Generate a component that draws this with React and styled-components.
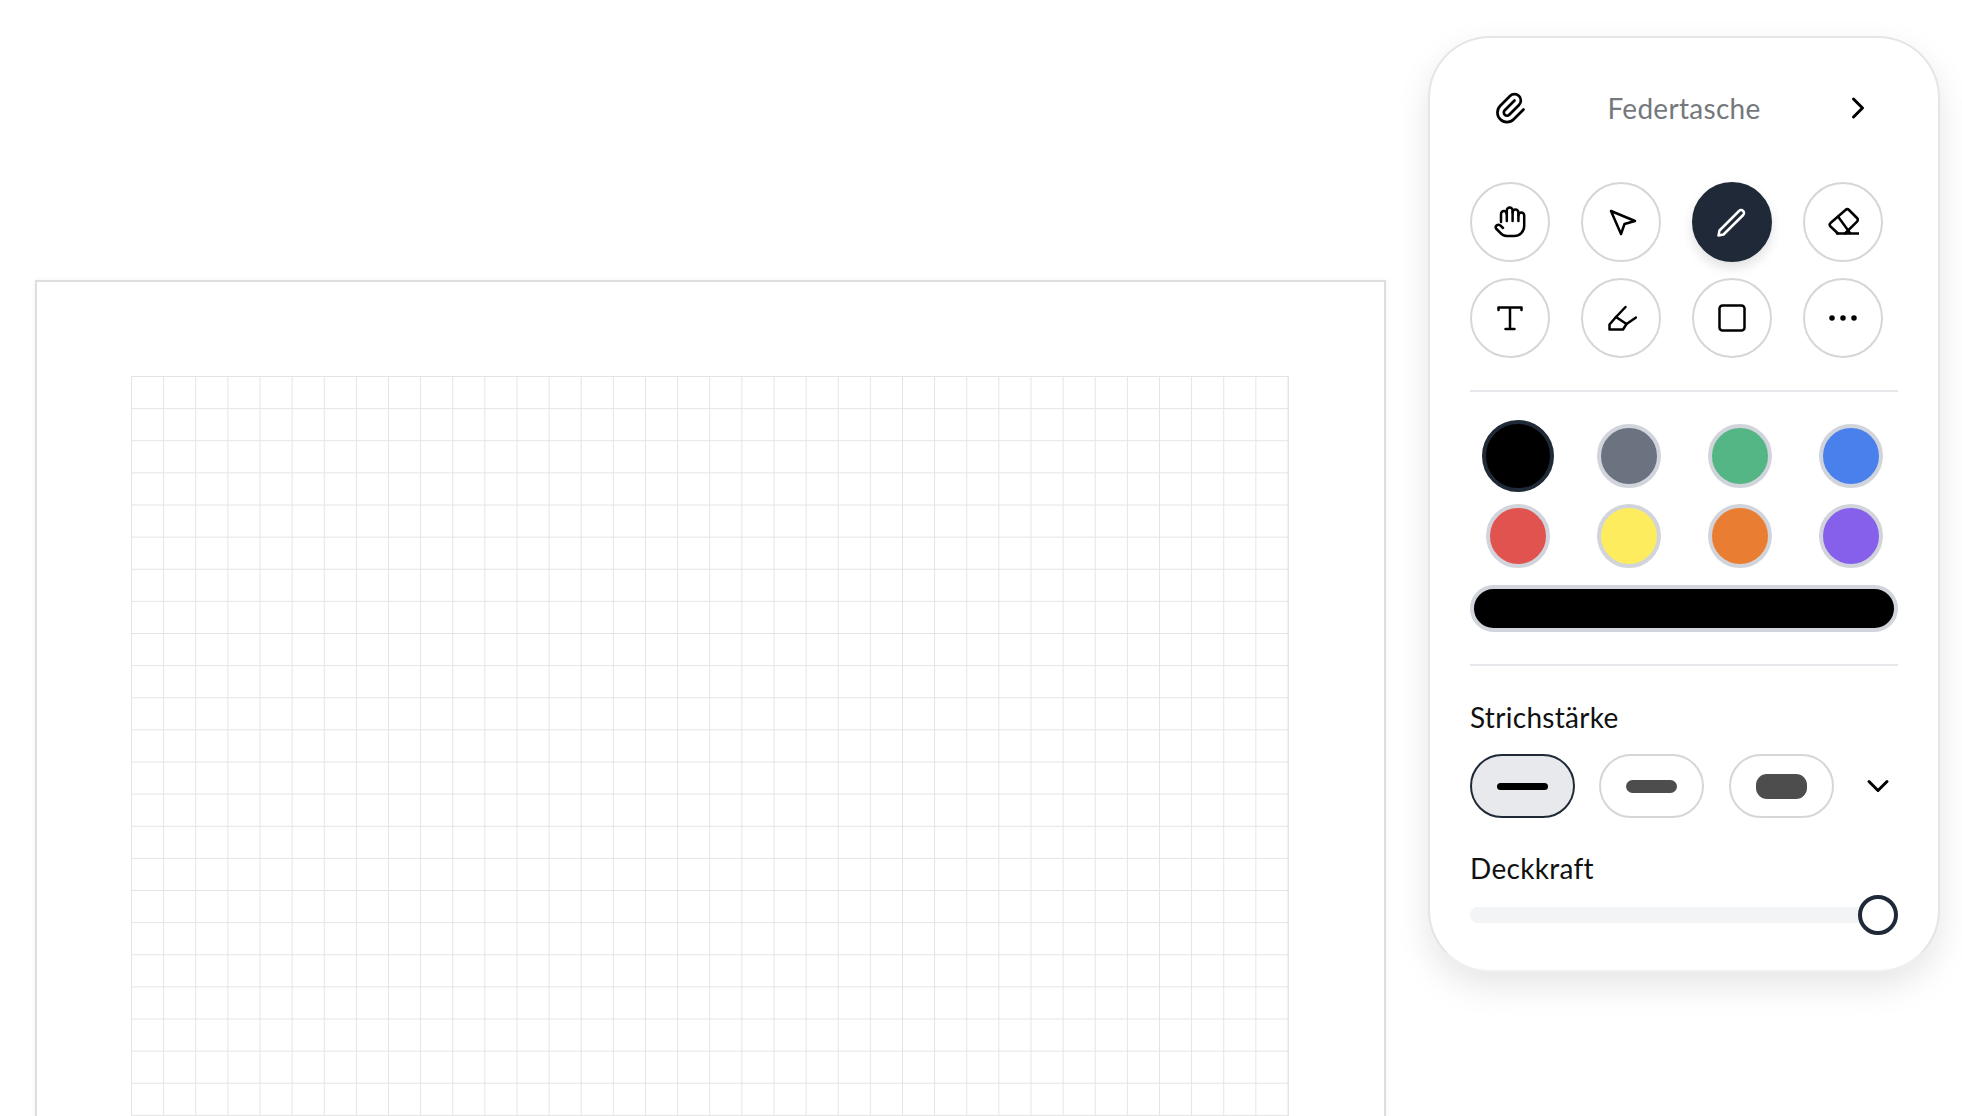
import React from "react"
import styled, { createGlobalStyle } from "styled-components"
import { TbPaperclip, TbChevronRight, TbChevronDown } from "react-icons/tb"

const GlobalStyle = createGlobalStyle`
  html, body {
    margin: 0;
    height: 100%;
    background: #fff;
    overflow: hidden;
  }
  body {
    font-family: "Lato", "Noto Sans", sans-serif;
  }
`

const Workspace = styled.main`
  display: flex;
  justify-content: space-between;
  align-items: flex-start;
  box-sizing: border-box;
  height: 100vh;
  overflow: hidden;
  padding: 36px 22px 0 35px;
`

const Sheet = styled.section`
  box-sizing: border-box;
  width: 1351px;
  height: 1200px;
  margin-top: 244px;
  padding: 94px 94px 0 94px;
  border: 2px solid #dedede;
  box-shadow: 0 0 6px rgba(0, 0, 0, 0.05);
  background: #fff;
`

const GridPaper = styled.div`
  width: 1157px;
  height: 1000px;
  background-color: #fff;
  background-image:
    linear-gradient(to right, #e4e4e4 1px, transparent 1px),
    linear-gradient(to bottom, #e4e4e4 1px, transparent 1px);
  background-size: 32.14px 32.14px;
  border-right: 1px solid #e4e4e4;
`

const Panel = styled.aside`
  box-sizing: border-box;
  width: 512px;
  height: 936px;
  padding: 47px 40px 0;
  border: 2px solid #e5e5e5;
  border-bottom-color: #f0f0f0;
  border-radius: 62px;
  background: #fff;
  box-shadow: 0 14px 34px rgba(0, 0, 0, 0.1);
`

const Header = styled.header`
  display: flex;
  align-items: center;
  justify-content: space-between;
  height: 46px;
  margin-bottom: 51px;
  padding: 0 22px;
`

const HeaderIcon = styled.span`
  display: flex;
  color: #000;
`

const Title = styled.h2`
  margin: 0;
  font-size: 28px;
  font-weight: 400;
  letter-spacing: 0.3px;
  color: #75787c;
`

const ToolGrid = styled.div`
  display: grid;
  grid-template-columns: repeat(4, 80px);
  grid-auto-rows: 80px;
  column-gap: 31px;
  row-gap: 16px;
`

const ToolButton = styled.button`
  display: flex;
  align-items: center;
  justify-content: center;
  padding: 0;
  border-radius: 50%;
  border: 2px solid ${({ $active }) => ($active ? "#1f2937" : "#d6d6d8")};
  background: ${({ $active }) => ($active ? "#1f2937" : "#fff")};
  color: ${({ $active }) => ($active ? "#fff" : "#000")};
  box-shadow: ${({ $active }) => ($active ? "0 6px 12px rgba(0, 0, 0, 0.12)" : "none")};
`

const Divider = styled.hr`
  height: 2px;
  margin: ${({ $top }) => $top}px 0 ${({ $bottom }) => $bottom}px;
  border: 0;
  background: #e5e7eb;
`

const SwatchGrid = styled.div`
  display: grid;
  grid-template-columns: repeat(4, 96px);
  grid-auto-rows: 72px;
  column-gap: 15px;
  row-gap: 8px;
  align-items: center;
  justify-items: center;
`

const Swatch = styled.button`
  box-sizing: border-box;
  width: ${({ $selected }) => ($selected ? 72 : 64)}px;
  height: ${({ $selected }) => ($selected ? 72 : 64)}px;
  padding: 0;
  border-radius: 50%;
  border: 4px solid ${({ $selected }) => ($selected ? "#1f2937" : "#d1d5db")};
  background: ${({ $color }) => $color};
`

const CurrentColor = styled.div`
  box-sizing: border-box;
  height: 47px;
  margin-top: 13px;
  border: 4px solid #d1d5db;
  border-radius: 24px;
  background: #000;
`

const Label = styled.div`
  height: 34px;
  line-height: 34px;
  font-size: 28px;
  letter-spacing: 0.3px;
  color: #111;
`

const WidthRow = styled.div`
  display: flex;
  align-items: center;
  gap: 24.5px;
  margin-top: 20px;
  margin-bottom: 33px;
`

const WidthButton = styled.button`
  display: flex;
  align-items: center;
  justify-content: center;
  width: 105px;
  height: 64px;
  padding: 0;
  border-radius: 32px;
  border: 2px solid ${({ $active }) => ($active ? "#1f2937" : "#d6d6d8")};
  background: ${({ $active }) => ($active ? "#e8e9ec" : "#fff")};
`

const WidthBar = styled.span`
  display: block;
  width: 51px;
  height: ${({ $size }) => $size}px;
  border-radius: ${({ $size }) => Math.min($size / 2, 11)}px;
  background: ${({ $active }) => ($active ? "#000" : "#4d4d4d")};
`

const MoreWidths = styled.span`
  display: flex;
  justify-content: center;
  width: 40px;
  margin-left: auto;
  color: #000;
`

const Slider = styled.div`
  position: relative;
  height: 16px;
  margin-top: 22px;
  border-radius: 8px;
  background: #f3f4f6;
`

const Thumb = styled.span`
  position: absolute;
  top: -12px;
  right: 0;
  box-sizing: border-box;
  width: 40px;
  height: 40px;
  border: 4px solid #1f2937;
  border-radius: 50%;
  background: #fff;
`

const Glyph = ({ children, fill = "none" }) => (
  <svg
    width="32"
    height="32"
    viewBox="0 0 32 32"
    fill={fill}
    stroke="currentColor"
    strokeWidth="2.5"
    strokeLinecap="round"
    strokeLinejoin="round"
  >
    {children}
  </svg>
)

const tools = [
  {
    name: "hand",
    icon: (
      <Glyph>
        <path d="M7 16V8A2.9 2.9 0 0 1 12.8 8V15" />
        <path d="M12.8 8V4.5A2.9 2.9 0 0 1 18.6 4.5V15" />
        <path d="M18.6 6.5A2.9 2.9 0 0 1 24.4 6.5V15" />
        <path d="M24.4 9.5A2.9 2.9 0 0 1 30.2 9.5V20A10 10 0 0 1 20.2 30H13A9 9 0 0 1 6 26.5L2 22.5A2.5 2.5 0 0 1 2.5 19.5A3 3 0 0 1 6 19.2L9 22" />
      </Glyph>
    ),
  },
  { name: "select", icon: <Glyph><path d="M6 5L30 15L19.5 18L16 28Z" /></Glyph> },
  {
    name: "pen",
    active: true,
    icon: <Glyph><path d="M2.5 29.5L3.5 24.5L23 5A2.9 2.9 0 0 1 27.2 9L7.5 28.5Z" /></Glyph>,
  },
  {
    name: "eraser",
    icon: (
      <Glyph>
        <path d="M11 27.5L3.5 20.5A2.5 2.5 0 0 1 3.5 17L18.5 4A2.5 2.5 0 0 1 22 4L30 12A2.5 2.5 0 0 1 30 15.5L18 27.5" />
        <path d="M10 27.5H31.5" />
        <path d="M11 10.5L23 27" />
      </Glyph>
    ),
  },
  { name: "text", icon: <Glyph><path d="M4.5 8V5.5H27.5V8M16 5.5V27M11.5 27H20.5" /></Glyph> },
  {
    name: "marker",
    icon: (
      <Glyph>
        <path d="M20.5 5L11 15L4.5 22.5V27.5H18L21.5 22" />
        <path d="M11 15L21.5 22L31 15.5" />
      </Glyph>
    ),
  },
  { name: "shape", icon: <Glyph><rect x="3.5" y="3.5" width="25" height="25" rx="3" /></Glyph> },
  {
    name: "more",
    icon: (
      <Glyph fill="currentColor">
        <circle cx="5" cy="16" r="1.5" />
        <circle cx="16" cy="16" r="1.5" />
        <circle cx="27" cy="16" r="1.5" />
      </Glyph>
    ),
  },
]

const colors = ["#000000", "#6b7280", "#54b685", "#4a80ec", "#e0534f", "#fdec5d", "#e97e33", "#865fea"]

const widths = [7, 13, 25]

const App = () => (
  <>
    <GlobalStyle />
    <Workspace>
      <Sheet>
        <GridPaper />
      </Sheet>
      <Panel>
        <Header>
          <HeaderIcon><TbPaperclip size={36} strokeWidth={1.8} /></HeaderIcon>
          <Title>Federtasche</Title>
          <HeaderIcon><TbChevronRight size={36} strokeWidth={2} /></HeaderIcon>
        </Header>
        <ToolGrid>
          {tools.map(tool => (
            <ToolButton key={tool.name} $active={tool.active} aria-label={tool.name}>
              {tool.icon}
            </ToolButton>
          ))}
        </ToolGrid>
        <Divider $top={32} $bottom={28} />
        <SwatchGrid>
          {colors.map((color, i) => (
            <Swatch key={color} $color={color} $selected={i === 0} aria-label={color} />
          ))}
        </SwatchGrid>
        <CurrentColor />
        <Divider $top={32} $bottom={34} />
        <Label>Strichstärke</Label>
        <WidthRow>
          {widths.map((size, i) => (
            <WidthButton key={size} $active={i === 0} aria-label={`${size}`}>
              <WidthBar $size={size} $active={i === 0} />
            </WidthButton>
          ))}
          <MoreWidths><TbChevronDown size={36} strokeWidth={2} /></MoreWidths>
        </WidthRow>
        <Label>Deckkraft</Label>
        <Slider>
          <Thumb />
        </Slider>
      </Panel>
    </Workspace>
  </>
)

export default App
